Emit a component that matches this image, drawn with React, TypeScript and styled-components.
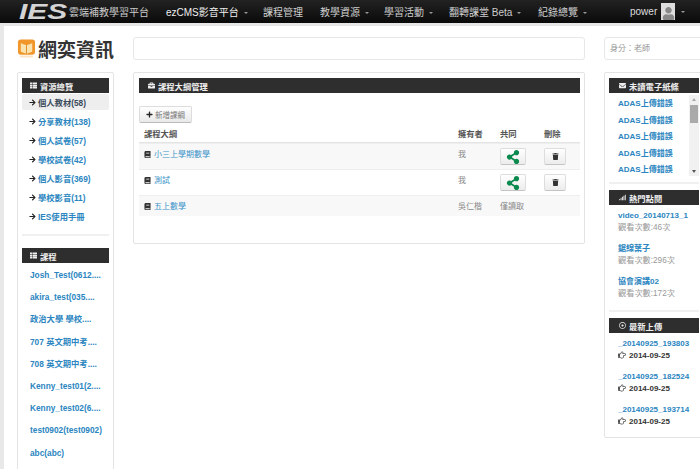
import React from 'react';
import styled, { createGlobalStyle } from 'styled-components';
import {
  FaArrowRight,
  FaBook,
  FaBriefcase,
  FaEnvelope,
  FaPlus,
  FaRegDotCircle,
  FaRegHandPointRight,
  FaShareAlt,
  FaSignal,
  FaThList,
  FaTrash,
  FaUser,
} from 'react-icons/fa';

const GlobalStyle = createGlobalStyle`
  html, body {
    margin: 0;
    padding: 0;
    width: 700px;
    height: 469px;
    overflow: hidden;
    background: #fff;
  }
  body {
    font-family: "Liberation Sans", "Noto Sans CJK TC", sans-serif;
    font-size: 8.3px;
    color: #333;
  }
`;

const Navbar = styled.div`
  height: 23px;
  display: flex;
  align-items: center;
  background: linear-gradient(#222, #0a0a0a);
  border-bottom: 3px solid #e6e6e6;
  color: #ccc;
  font-size: 10px;
  white-space: nowrap;
`;

const Brand = styled.div`
  width: 69px;
  padding-left: 19px;
  box-sizing: border-box;
  flex: none;
`;

const BrandMark = styled.span`
  display: inline-block;
  font-size: 22px;
  font-weight: bold;
  font-style: italic;
  line-height: 20px;
  color: #d4d4d4;
  transform: scaleX(1.36);
  transform-origin: left center;
`;

const BrandTitle = styled.div`
  width: 97px;
  flex: none;
`;

const NavItem = styled.div<{ $width: number; $bright?: boolean }>`
  width: ${(p) => p.$width}px;
  flex: none;
  color: ${(p) => (p.$bright ? '#eee' : '#ccc')};
`;

const Caret = styled.span`
  display: inline-block;
  margin-left: 5px;
  vertical-align: middle;
  border-top: 2px solid #999;
  border-left: 2px solid transparent;
  border-right: 2px solid transparent;
`;

const Avatar = styled.span`
  width: 14px;
  height: 17px;
  margin: 0 1px 0 4px;
  display: inline-flex;
  align-items: flex-end;
  justify-content: center;
  overflow: hidden;
  background: #ddd;
  color: #888;
  font-size: 13px;
`;

const UserMenu = styled.div`
  margin-left: 36px;
  display: flex;
  align-items: center;
  color: #ddd;
`;

const Page = styled.div`
  display: grid;
  grid-template-columns: 97px 452px 100px;
  grid-template-rows: 23px auto;
  column-gap: 19px;
  row-gap: 12px;
  padding: 11px 0 0 13px;
  margin-left: 4px;
  box-shadow: -4px 0 0 #e8e8e8;
  height: 443px;
  box-sizing: border-box;
  overflow: hidden;
  align-items: start;
`;

const Logo = styled.div`
  display: flex;
  align-items: center;
  gap: 2px;
  height: 23px;
  white-space: nowrap;
  font-size: 19px;
  font-weight: bold;
  color: #333;
  font-family: "Noto Sans CJK TC", sans-serif;
`;

const TopBox = styled.div`
  height: 23px;
  box-sizing: border-box;
  border: 1px solid #e8e8e8;
  border-radius: 3px;
  padding-left: 5px;
  line-height: 21px;
  color: #999;
  font-size: 8px;
`;

const Panel = styled.div<{ $pad?: string }>`
  border: 1px solid #e4e4e4;
  border-radius: 2px;
  padding: ${(p) => p.$pad ?? '5px 4px'};
  background: #fff;
`;

const SectionHeader = styled.div<{ $indent?: number }>`
  height: 15px;
  box-sizing: border-box;
  display: flex;
  align-items: center;
  gap: 3px;
  padding-left: ${(p) => p.$indent ?? 8}px;
  background: #2e2e2e;
  color: #eee;
  font-weight: bold;
  font-size: 8.3px;
  svg {
    font-size: 7px;
  }
`;

const SideItem = styled.div<{ $active?: boolean }>`
  height: 16px;
  margin-bottom: 3px;
  display: flex;
  align-items: center;
  gap: 2px;
  padding-left: 7px;
  border-radius: 2px;
  font-weight: bold;
  color: ${(p) => (p.$active ? '#3a4a5a' : '#2a85c0')};
  background: ${(p) => (p.$active ? '#eee' : 'transparent')};
  svg {
    color: #222;
    font-size: 7px;
  }
`;

const SideList = styled.div`
  margin-top: 1px;
`;

const Divider = styled.div<{ $top: number; $bottom: number }>`
  height: 2px;
  background: #f0f0f0;
  margin: ${(p) => p.$top}px 0 ${(p) => p.$bottom}px;
`;

const CourseItem = styled.div`
  height: 22.2px;
  line-height: 22px;
  padding-left: 8px;
  font-weight: bold;
  color: #2a85c0;
  white-space: nowrap;
`;

const CourseList = styled.div`
  padding: 1px 0 12px;
`;

const AddButton = styled.div`
  width: 53px;
  height: 17px;
  box-sizing: border-box;
  margin: 13px 0 3px;
  display: flex;
  align-items: center;
  justify-content: center;
  gap: 2px;
  border: 1px solid #ddd;
  border-bottom-color: #bbb;
  border-radius: 2px;
  background: linear-gradient(#fff, #e9e9e9);
  color: #777;
  font-size: 7.5px;
  svg {
    color: #222;
    font-size: 7px;
  }
`;

const Table = styled.div`
  margin-bottom: 22px;
`;

const TableRow = styled.div<{ $height: number; $striped?: boolean; $head?: boolean }>`
  height: ${(p) => p.$height}px;
  display: grid;
  grid-template-columns: 319px 42px 44px 1fr;
  box-sizing: border-box;
  border-bottom: ${(p) => (p.$head ? '1px solid #e4e4e4' : 'none')};
  border-top: ${(p) => (p.$head ? 'none' : '1px solid #eee')};
  background: ${(p) => (p.$striped ? '#f8f8f8' : 'transparent')};
  font-weight: ${(p) => (p.$head ? 'bold' : 'normal')};
  font-size: ${(p) => (p.$head ? 8.3 : 8)}px;
  color: ${(p) => (p.$head ? '#555' : '#888')};
`;

const Cell = styled.div<{ $indent?: number; $top?: number }>`
  padding: ${(p) => p.$top ?? 5}px 0 0 ${(p) => p.$indent ?? 0}px;
  display: flex;
  align-items: flex-start;
  gap: 3px;
  line-height: 11px;
`;

const CourseLink = styled.span`
  color: #3a93c9;
`;

const BookIcon = styled(FaBook)`
  color: #333;
  font-size: 7px;
  margin-top: 2px;
`;

const ActionButton = styled.div<{ $width: number; $color: string; $size: number }>`
  width: ${(p) => p.$width}px;
  height: 17px;
  box-sizing: border-box;
  display: flex;
  align-items: center;
  justify-content: center;
  border: 1px solid #ddd;
  border-bottom-color: #c4c4c4;
  border-radius: 2px;
  background: linear-gradient(#fff, #ececec);
  color: ${(p) => p.$color};
  font-size: ${(p) => p.$size}px;
`;

const MailBox = styled.div`
  height: 81px;
  margin-top: 2px;
  display: flex;
  justify-content: space-between;
`;

const MailList = styled.div`
  padding-left: 9px;
  font-weight: bold;
  font-size: 8px;
  color: #2a85c0;
`;

const MailItem = styled.div`
  height: 16.5px;
  line-height: 17px;
  white-space: nowrap;
`;

const Scrollbar = styled.div`
  width: 10px;
  height: 81px;
  position: relative;
  background: #f1f1f1;
`;

const ScrollThumb = styled.div`
  position: absolute;
  left: 1px;
  top: 10px;
  width: 8px;
  height: 18px;
  background: #aaa;
`;

const ScrollArrow = styled.div<{ $down?: boolean }>`
  position: absolute;
  left: 3px;
  ${(p) => (p.$down ? 'bottom: 3px;' : 'top: 3px;')}
  border-left: 2px solid transparent;
  border-right: 2px solid transparent;
  ${(p) => (p.$down ? 'border-top: 3px solid #555;' : 'border-bottom: 3px solid #aaa;')}
`;

const InfoList = styled.div`
  padding: 5px 0 0 9px;
`;

const InfoItem = styled.div`
  height: 33px;
  line-height: 11.5px;
  font-size: 8px;
  &:last-child {
    height: 28px;
  }
`;

const InfoLink = styled.div`
  font-weight: bold;
  color: #2a85c0;
  white-space: nowrap;
`;

const InfoMeta = styled.div<{ $dark?: boolean }>`
  display: flex;
  align-items: center;
  gap: 3px;
  color: ${(p) => (p.$dark ? '#333' : '#999')};
  font-weight: ${(p) => (p.$dark ? 'bold' : 'normal')};
  font-size: ${(p) => (p.$dark ? 8 : 8.2)}px;
  svg {
    color: #555;
    font-size: 8px;
  }
`;

const PopularList = styled(InfoList)`
  padding-bottom: 5px;
`;

const resources = [
  '個人教材(58)',
  '分享教材(138)',
  '個人試卷(57)',
  '學校試卷(42)',
  '個人影音(369)',
  '學校影音(11)',
  'IES使用手冊',
];

const courses = [
  'Josh_Test(0612....',
  'akira_test(035....',
  '政治大學 學校....',
  '707 英文期中考....',
  '708 英文期中考....',
  'Kenny_test01(2....',
  'Kenny_test02(6....',
  'test0902(test0902)',
  'abc(abc)',
];

const outlines = [
  { name: '小三上學期數學', owner: '我', mine: true, height: 26 },
  { name: '測試', owner: '我', mine: true, height: 26 },
  { name: '五上數學', owner: '吳仁楷', mine: false, height: 21 },
];

const popular = [
  { name: 'video_20140713_1', views: '觀看次數:46次' },
  { name: '鋸線葉子', views: '觀看次數:296次' },
  { name: '協會演講02', views: '觀看次數:172次' },
];

const uploads = ['_20140925_193803', '_20140925_182524', '_20140925_193714'];

export default function App() {
  return (
    <>
      <GlobalStyle />
      <Navbar>
        <Brand><BrandMark>IES</BrandMark></Brand>
        <BrandTitle>雲端補教學習平台</BrandTitle>
        <NavItem $width={97} $bright>ezCMS影音平台<Caret /></NavItem>
        <NavItem $width={57}>課程管理</NavItem>
        <NavItem $width={64}>教學資源<Caret /></NavItem>
        <NavItem $width={65}>學習活動<Caret /></NavItem>
        <NavItem $width={89}>翻轉課堂 Beta<Caret /></NavItem>
        <NavItem $width={56}>紀錄總覽<Caret /></NavItem>
        <UserMenu>
          power
          <Avatar><FaUser /></Avatar>
          <Caret />
        </UserMenu>
      </Navbar>
      <Page>
        <Logo>
          <svg width="20" height="23" viewBox="0 0 20 23">
            <rect x="1" y="2" width="18" height="16" rx="3" fill="#f0962a" />
            <path d="M4 6 L10 8 L16 6 V15 L10 17 L4 15 Z" fill="#fbe3b0" />
            <path d="M10 8 V17" stroke="#d98a2a" strokeWidth="1" />
            <rect x="3" y="19" width="14" height="2" rx="1" fill="#fbe3c8" />
          </svg>
          網奕資訊
        </Logo>
        <TopBox />
        <TopBox>身分：老師</TopBox>

        <Panel>
          <SectionHeader><FaThList />資源總覽</SectionHeader>
          <SideList>
            {resources.map((item, i) => (
              <SideItem key={item} $active={i === 0}>
                <FaArrowRight />
                {item}
              </SideItem>
            ))}
          </SideList>
          <Divider $top={10} $bottom={12} />
          <SectionHeader><FaThList />課程</SectionHeader>
          <CourseList>
            {courses.map((item) => (
              <CourseItem key={item}>{item}</CourseItem>
            ))}
          </CourseList>
        </Panel>

        <Panel $pad="5px 4px 5px 5px">
          <SectionHeader $indent={9}><FaBriefcase />課程大綱管理</SectionHeader>
          <AddButton><FaPlus />新增課綱</AddButton>
          <TableRow $height={17} $head>
            <Cell $indent={5} $top={3}>課程大綱</Cell>
            <Cell $top={3}>擁有者</Cell>
            <Cell $top={3}>共同</Cell>
            <Cell $top={3}>刪除</Cell>
          </TableRow>
          <Table>
            {outlines.map((row, i) => (
              <TableRow key={row.name} $height={row.height} $striped={i % 2 === 0}>
                <Cell $indent={5}>
                  <BookIcon />
                  <CourseLink>{row.name}</CourseLink>
                </Cell>
                <Cell>{row.owner}</Cell>
                <Cell $top={row.mine ? 4 : 5}>
                  {row.mine ? (
                    <ActionButton $width={26} $color="#0a8a4e" $size={14}><FaShareAlt /></ActionButton>
                  ) : (
                    '僅讀取'
                  )}
                </Cell>
                <Cell $top={4}>
                  {row.mine && (
                    <ActionButton $width={22} $color="#333" $size={7}><FaTrash /></ActionButton>
                  )}
                </Cell>
              </TableRow>
            ))}
          </Table>
        </Panel>

        <Panel>
          <SectionHeader $indent={10}><FaEnvelope />未讀電子紙條</SectionHeader>
          <MailBox>
            <MailList>
              {[0, 1, 2, 3, 4].map((i) => (
                <MailItem key={i}>ADAS上傳錯誤</MailItem>
              ))}
            </MailList>
            <Scrollbar>
              <ScrollArrow />
              <ScrollThumb />
              <ScrollArrow $down />
            </Scrollbar>
          </MailBox>
          <Divider $top={6} $bottom={6} />
          <SectionHeader $indent={10}><FaSignal />熱門點閱</SectionHeader>
          <PopularList>
            {popular.map((item) => (
              <InfoItem key={item.name}>
                <InfoLink>{item.name}</InfoLink>
                <InfoMeta>{item.views}</InfoMeta>
              </InfoItem>
            ))}
          </PopularList>
          <Divider $top={1} $bottom={6} />
          <SectionHeader $indent={10}><FaRegDotCircle />最新上傳</SectionHeader>
          <InfoList>
            {uploads.map((item) => (
              <InfoItem key={item}>
                <InfoLink>{item}</InfoLink>
                <InfoMeta $dark><FaRegHandPointRight />2014-09-25</InfoMeta>
              </InfoItem>
            ))}
          </InfoList>
        </Panel>
      </Page>
    </>
  );
}
